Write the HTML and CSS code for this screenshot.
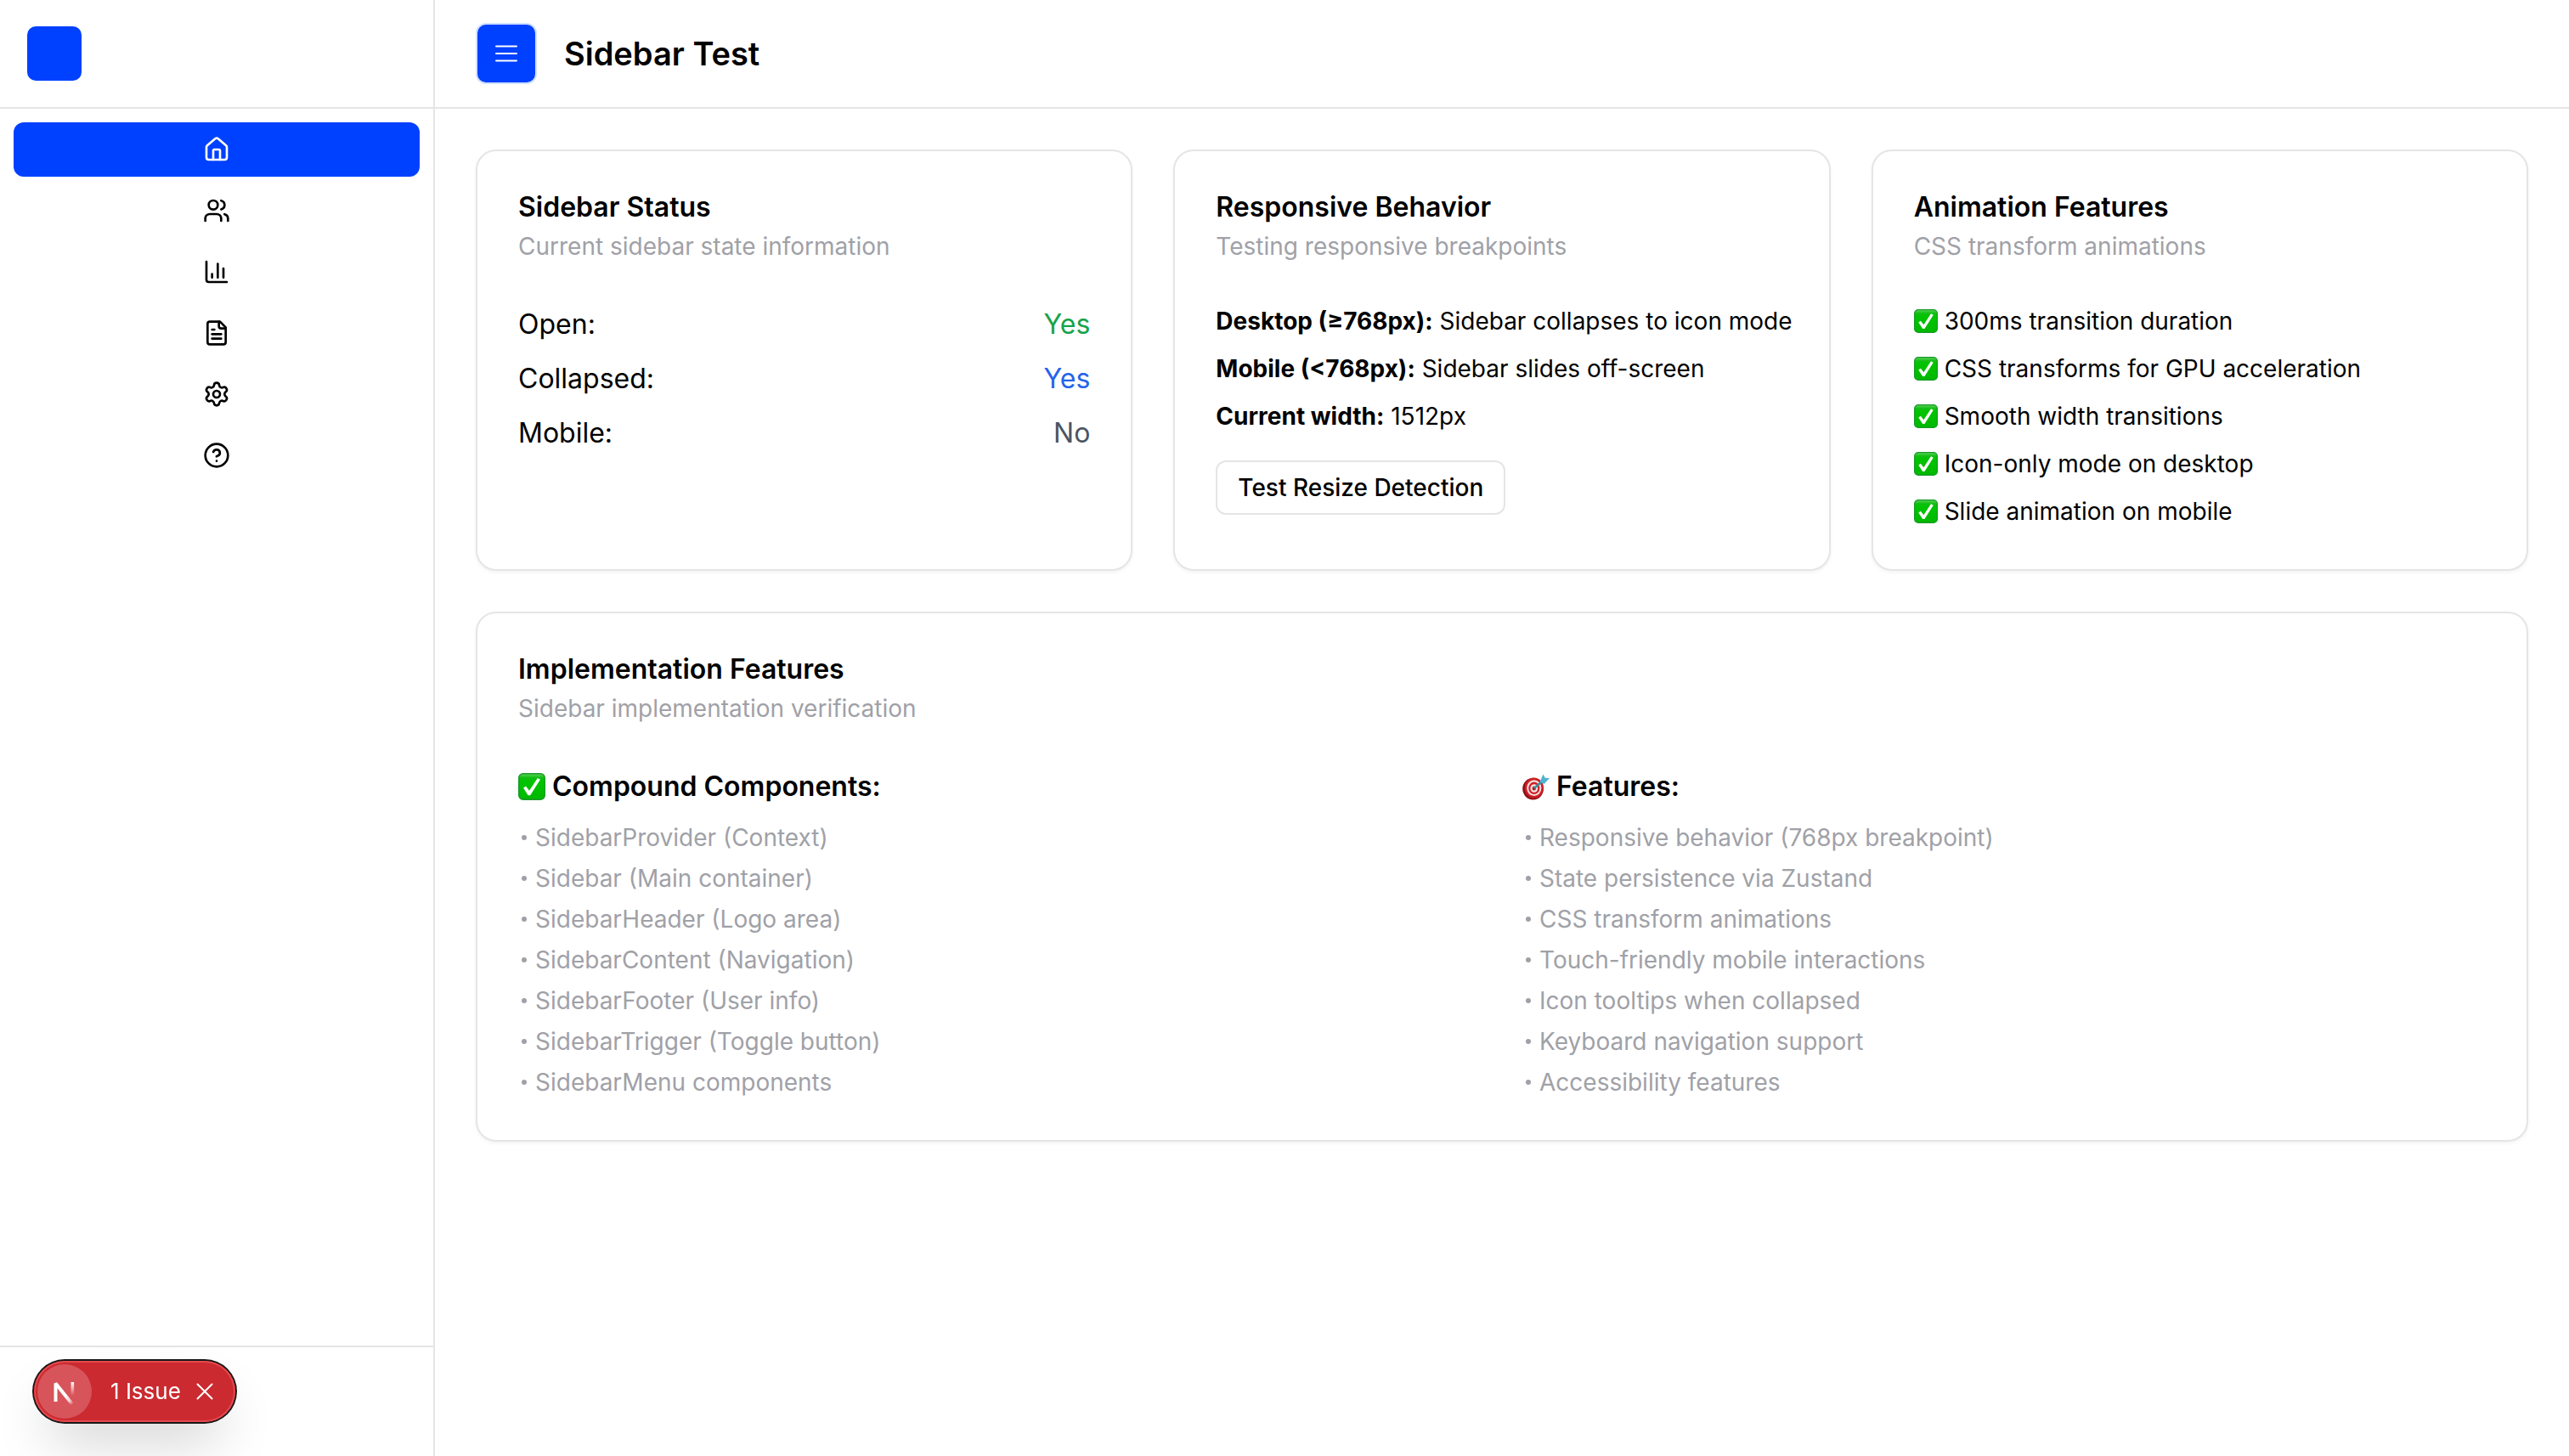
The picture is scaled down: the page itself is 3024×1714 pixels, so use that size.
FILE: index.html
```html
<!DOCTYPE html>
<html lang="en">
<head>
<meta charset="utf-8">
<meta name="viewport" content="width=device-width, initial-scale=1">
<title>Sidebar Test</title>
<link rel="stylesheet" href="styles.css">
</head>
<body>
<svg class="sprite" aria-hidden="true">
  <defs>
    <linearGradient id="checkFill" x1="0" y1="0" x2="0" y2="1">
      <stop offset="0" stop-color="#5fd45f"/>
      <stop offset="0.16" stop-color="#12bd12"/>
      <stop offset="0.3" stop-color="#00c400"/>
      <stop offset="1" stop-color="#00b800"/>
    </linearGradient>
    <symbol id="check" viewBox="0 0 32 32">
      <rect x="0.700" y="0.700" width="30.600" height="30.600" rx="5" fill="url(#checkFill)" stroke="#1a9a2a" stroke-width="1.4"/>
      <path d="M6 17.600l3-2 4 5.200L22.800 6l3.200 1.600-11.800 18.600h-2.600z" fill="#fff"/>
    </symbol>
    <symbol id="target" viewBox="0 0 32 32">
      <ellipse cx="12.6" cy="18.6" rx="12.4" ry="12.8" fill="#8e1118"/>
      <ellipse cx="13.8" cy="17.6" rx="11" ry="12" fill="#cf2027"/>
      <ellipse cx="13.8" cy="17.6" rx="8.6" ry="9.4" fill="#f3e3e0"/>
      <ellipse cx="13.8" cy="17.8" rx="6.6" ry="7.2" fill="#cf2027"/>
      <ellipse cx="13.8" cy="18" rx="4.4" ry="4.8" fill="#f3e3e0"/>
      <ellipse cx="13.8" cy="18" rx="2.2" ry="2.6" fill="#b5161d"/>
      <path d="M14 18L25 8" stroke="#3b8fa0" stroke-width="2.4"/>
      <path d="M20.500 10.500l4-9 2.300 4.200L32 6l-6.500 7z" fill="#4fb3cf"/>
    </symbol>
  </defs>
</svg>
<div class="app">
  <aside class="sidebar">
    <div class="sidebar-header"><span class="logo"></span></div>
    <nav class="menu" aria-label="Main">
      <a class="menu-item is-active" href="#home" aria-label="Home"><svg class="icon" viewBox="0 0 24 24"><path d="M15 21v-8a1 1 0 0 0-1-1h-4a1 1 0 0 0-1 1v8"/><path d="M3 10a2 2 0 0 1 .709-1.528l7-5.999a2 2 0 0 1 2.582 0l7 5.999A2 2 0 0 1 21 10v9a2 2 0 0 1-2 2H5a2 2 0 0 1-2-2z"/></svg></a>
      <a class="menu-item" href="#users" aria-label="Users"><svg class="icon" viewBox="0 0 24 24"><path d="M16 21v-2a4 4 0 0 0-4-4H6a4 4 0 0 0-4 4v2"/><circle cx="9" cy="7" r="4"/><path d="M22 21v-2a4 4 0 0 0-3-3.870"/><path d="M16 3.130a4 4 0 0 1 0 7.750"/></svg></a>
      <a class="menu-item" href="#analytics" aria-label="Analytics"><svg class="icon" viewBox="0 0 24 24"><path d="M3 3v16a2 2 0 0 0 2 2h16"/><path d="M18 17V9"/><path d="M13 17V5"/><path d="M8 17v-3"/></svg></a>
      <a class="menu-item" href="#documents" aria-label="Documents"><svg class="icon" viewBox="0 0 24 24"><path d="M15 2H6a2 2 0 0 0-2 2v16a2 2 0 0 0 2 2h12a2 2 0 0 0 2-2V7Z"/><path d="M14 2v4a2 2 0 0 0 2 2h4"/><path d="M10 9H8"/><path d="M16 13H8"/><path d="M16 17H8"/></svg></a>
      <a class="menu-item" href="#settings" aria-label="Settings"><svg class="icon" viewBox="0 0 24 24"><path d="M9.671 4.136a2.340 2.340 0 0 1 4.659 0 2.340 2.340 0 0 0 3.319 1.915 2.340 2.340 0 0 1 2.330 4.033 2.340 2.340 0 0 0 0 3.831 2.340 2.340 0 0 1-2.330 4.033 2.340 2.340 0 0 0-3.319 1.915 2.340 2.340 0 0 1-4.659 0 2.340 2.340 0 0 0-3.320-1.915 2.340 2.340 0 0 1-2.330-4.033 2.340 2.340 0 0 0 0-3.831A2.340 2.340 0 0 1 6.350 6.051a2.340 2.340 0 0 0 3.319-1.915"/><circle cx="12" cy="12" r="3"/></svg></a>
      <a class="menu-item" href="#help" aria-label="Help"><svg class="icon" viewBox="0 0 24 24"><circle cx="12" cy="12" r="10"/><path d="M9.090 9a3 3 0 0 1 5.830 1c0 2-3 3-3 3"/><path d="M12 17h.01"/></svg></a>
    </nav>
    <div class="sidebar-footer"></div>
  </aside>
  <div class="page">
    <header class="topbar">
      <button class="trigger" type="button" aria-label="Toggle sidebar"><svg class="trigger-icon" viewBox="0 0 32 32"><path d="M4 7.500h24M4 16h24M4 24.500h24"/></svg></button>
      <h1 class="page-title">Sidebar Test</h1>
    </header>
    <main class="content">
      <div class="cards">
        <section class="card">
          <div class="card-header"><h2 class="card-title">Sidebar Status</h2><p class="card-desc">Current sidebar state information</p></div>
          <dl class="status">
            <div class="status-row"><dt>Open:</dt><dd class="is-green">Yes</dd></div>
            <div class="status-row"><dt>Collapsed:</dt><dd class="is-blue">Yes</dd></div>
            <div class="status-row"><dt>Mobile:</dt><dd class="is-gray">No</dd></div>
          </dl>
        </section>
        <section class="card">
          <div class="card-header"><h2 class="card-title">Responsive Behavior</h2><p class="card-desc">Testing responsive breakpoints</p></div>
          <div class="lines">
            <p><strong>Desktop (≥768px):</strong> Sidebar collapses to icon mode</p>
            <p><strong>Mobile (&lt;768px):</strong> Sidebar slides off-screen</p>
            <p><strong>Current width:</strong> 1512px</p>
          </div>
          <button class="outline-button" type="button">Test Resize Detection</button>
        </section>
        <section class="card">
          <div class="card-header"><h2 class="card-title">Animation Features</h2><p class="card-desc">CSS transform animations</p></div>
          <ul class="lines">
            <li class="check-line"><svg class="emoji"><use href="#check"/></svg>300ms transition duration</li>
            <li class="check-line"><svg class="emoji"><use href="#check"/></svg>CSS transforms for GPU acceleration</li>
            <li class="check-line"><svg class="emoji"><use href="#check"/></svg>Smooth width transitions</li>
            <li class="check-line"><svg class="emoji"><use href="#check"/></svg>Icon-only mode on desktop</li>
            <li class="check-line"><svg class="emoji"><use href="#check"/></svg>Slide animation on mobile</li>
          </ul>
        </section>
      </div>
      <section class="card">
        <div class="card-header"><h2 class="card-title">Implementation Features</h2><p class="card-desc">Sidebar implementation verification</p></div>
        <div class="columns">
          <div class="column">
            <h3 class="column-title"><svg class="emoji-large"><use href="#check"/></svg>Compound Components:</h3>
            <ul class="bullets">
              <li>SidebarProvider (Context)</li>
              <li>Sidebar (Main container)</li>
              <li>SidebarHeader (Logo area)</li>
              <li>SidebarContent (Navigation)</li>
              <li>SidebarFooter (User info)</li>
              <li>SidebarTrigger (Toggle button)</li>
              <li>SidebarMenu components</li>
            </ul>
          </div>
          <div class="column">
            <h3 class="column-title"><svg class="emoji-large"><use href="#target"/></svg>Features:</h3>
            <ul class="bullets">
              <li>Responsive behavior (768px breakpoint)</li>
              <li>State persistence via Zustand</li>
              <li>CSS transform animations</li>
              <li>Touch-friendly mobile interactions</li>
              <li>Icon tooltips when collapsed</li>
              <li>Keyboard navigation support</li>
              <li>Accessibility features</li>
            </ul>
          </div>
        </div>
      </section>
    </main>
  </div>
</div>
<div class="issue-badge">
  <button class="next-mark" type="button" aria-label="Open dev tools"><svg class="next-logo" viewBox="0 0 40 40"><defs><linearGradient id="diag" x1="22" y1="24" x2="30" y2="35" gradientUnits="userSpaceOnUse"><stop stop-color="#fff"/><stop offset="0.600" stop-color="#fff" stop-opacity="0.700"/><stop offset="1" stop-color="#fff" stop-opacity="0"/></linearGradient><linearGradient id="bar" x1="0" y1="9" x2="0" y2="25" gradientUnits="userSpaceOnUse"><stop stop-color="#fff"/><stop offset="1" stop-color="#fff" stop-opacity="0"/></linearGradient></defs><path d="M9.500 32V10.500L29 35" fill="none" stroke="url(#diag)" stroke-width="4" stroke-linejoin="bevel"/><rect x="27.500" y="9" width="3.600" height="16" fill="url(#bar)"/></svg></button>
  <button class="issue-text" type="button">1 Issue</button>
  <button class="issue-close" type="button" aria-label="Dismiss"><svg class="close-icon" viewBox="0 0 20 20"><path d="M1.500 1.500l17 17M18.500 1.500l-17 17"/></svg></button>
</div>
</body>
</html>
```

FILE: styles.css
```css
* { box-sizing: border-box; }

body {
  margin: 0;
  background: #fff;
  color: #000;
  font-family: Inter, "Liberation Sans", sans-serif;
  font-size: 28px;
  line-height: 40px;
}

h1, h2, h3, p, ul, dl, dd { margin: 0; padding: 0; }
ul { list-style: none; }
button { font: inherit; cursor: pointer; }

.sprite { position: absolute; width: 0; height: 0; }

.app { display: flex; min-height: 100vh; }

.sidebar {
  display: flex;
  flex: none;
  flex-direction: column;
  width: 512px;
  border-right: 2px solid #e5e5e5;
}

.sidebar-header {
  display: flex;
  align-items: center;
  height: 128px;
  padding: 0 32px;
  border-bottom: 2px solid #e5e5e5;
}

.logo { width: 64px; height: 64px; border-radius: 10px; background: #0040ff; }

.menu { display: flex; flex: 1; flex-direction: column; gap: 8px; padding: 16px; }

.menu-item {
  display: flex;
  align-items: center;
  justify-content: center;
  height: 64px;
  border-radius: 12px;
  color: #000;
}

.menu-item.is-active { background: #0040ff; color: #fff; }

.icon, .trigger-icon, .close-icon {
  fill: none;
  stroke: currentColor;
  stroke-width: 2;
  stroke-linecap: round;
  stroke-linejoin: round;
}

.icon { width: 32px; height: 32px; }

.sidebar-footer { height: 130px; border-top: 2px solid #e5e5e5; }

.page { flex: 1; min-width: 0; }

.topbar {
  display: flex;
  align-items: center;
  gap: 32px;
  height: 128px;
  padding: 0 48px;
  border-bottom: 2px solid #e5e5e5;
}

.trigger {
  display: flex;
  align-items: center;
  justify-content: center;
  width: 72px;
  height: 72px;
  padding: 0;
  border: 2px solid #cfe0ff;
  border-radius: 12px;
  background: #0040ff;
  color: #fff;
}

.trigger-icon { width: 32px; height: 32px; }

.page-title { font-size: 38px; line-height: 56px; font-weight: 600; }

.content { display: flex; flex-direction: column; gap: 48px; padding: 48px; }

.cards { display: grid; grid-template-columns: repeat(3, minmax(0, 1fr)); gap: 48px; }

.card {
  padding: 48px;
  border: 2px solid #e5e5e5;
  border-radius: 24px;
  background: #fff;
  box-shadow: 0 2px 4px rgba(0, 0, 0, 0.05);
}

.card-header { display: flex; flex-direction: column; gap: 8px; margin-bottom: 48px; }
.card-title { font-size: 32px; line-height: 36px; font-weight: 600; }
.card-desc { color: #a0a1a7; }

.status, .lines { display: flex; flex-direction: column; gap: 16px; }
.lines { white-space: nowrap; }
.status { font-size: 32px; line-height: 48px; }
.status-row { display: flex; justify-content: space-between; }
.is-green { color: #16a34a; }
.is-blue { color: #2563eb; }
.is-gray { color: #4b5563; }

.outline-button {
  height: 64px;
  margin-top: 32px;
  padding: 0 24px;
  border: 2px solid #e5e5e5;
  border-radius: 12px;
  background: #fff;
  color: #000;
  font-weight: 500;
}

.check-line, .column-title { display: flex; align-items: center; }
.check-line { gap: 8px; }
.emoji { width: 28px; height: 28px; }
.emoji-large { width: 32px; height: 32px; }

.columns { display: grid; grid-template-columns: repeat(2, 1fr); gap: 48px; }
.column { display: flex; flex-direction: column; gap: 16px; }
.column-title { gap: 8px; font-size: 32px; line-height: 48px; font-weight: 600; }

.bullets { display: flex; flex-direction: column; gap: 8px; color: #a0a1a7; }
.bullets li { display: flex; align-items: center; gap: 10px; }
.bullets li::before { content: ""; width: 6px; height: 6px; margin-left: 4px; border-radius: 50%; background: currentColor; }

.issue-badge {
  position: fixed;
  bottom: 40px;
  left: 40px;
  display: flex;
  align-items: center;
  height: 72px;
  padding-right: 16px;
  border-radius: 36px;
  background: #ca2a30;
  box-shadow: 0 0 0 2px #171717, inset 0 0 0 2px #e5484d, 0 32px 64px -16px rgba(0, 0, 0, 0.24);
  color: #fff;
}

.issue-badge button { border: 0; background: none; color: inherit; padding: 0; }
.issue-badge .next-mark { display: flex; width: 64px; height: 64px; margin-left: 4px; border-radius: 50%; background: #d7545a; align-items: center; justify-content: center; }
.next-logo { width: 40px; height: 40px; }
.issue-badge .issue-text { margin-left: 22px; font-size: 26px; }
.issue-badge .issue-close { display: flex; align-items: center; justify-content: center; width: 40px; height: 40px; margin-left: 8px; }
.close-icon { width: 20px; height: 20px; }
```
